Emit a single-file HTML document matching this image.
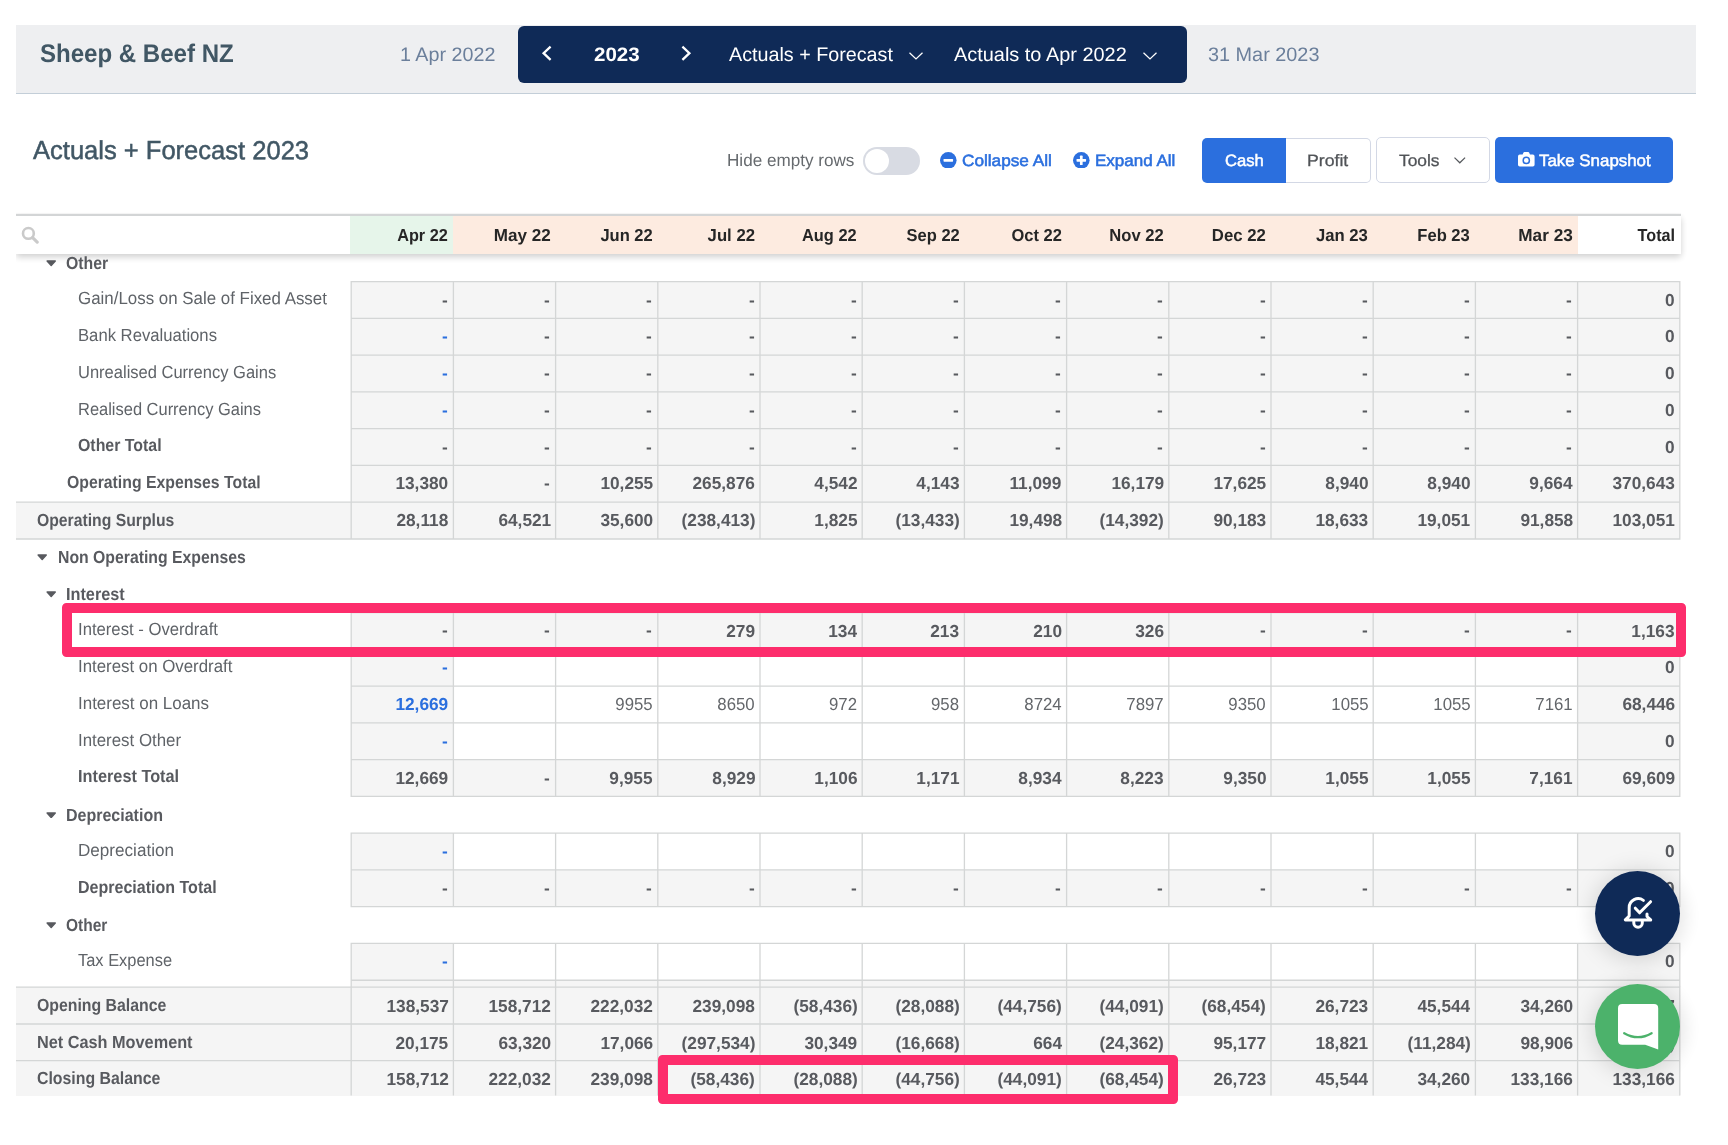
<!DOCTYPE html>
<html><head><meta charset="utf-8"><title>Actuals + Forecast 2023</title>
<style>
html,body{margin:0;padding:0;background:#fff;}
body{width:1728px;height:1145px;position:relative;overflow:hidden;font-family:"Liberation Sans", sans-serif;}
#p div,#p svg{position:absolute;box-sizing:border-box;}
#p .t{white-space:nowrap;height:24px;line-height:24px;}
#p{opacity:0.999;}
</style></head><body><div id="p">
<div style="left:16.00px;top:25.00px;width:1680.00px;height:68.30px;background:#eeeff1;"></div>
<div style="left:16.00px;top:92.80px;width:1680.00px;height:1.20px;background:#c3ced8;"></div>
<div style="left:518.00px;top:26.00px;width:669.00px;height:56.60px;background:#0f2a57;border-radius:6px;"></div>
<svg style="left:542.00px;top:45.60px;overflow:visible" width="9.00" height="14.40" viewBox="0 0 9.00 14.40"><path d="M8.6 0.6 L1.6 7.2 L8.6 13.8" fill="none" stroke="#fff" stroke-width="2.30" stroke-linecap="butt" stroke-linejoin="miter"/></svg>
<svg style="left:681.60px;top:45.60px;overflow:visible" width="9.00" height="14.40" viewBox="0 0 9.00 14.40"><path d="M0.4 0.6 L7.4 7.2 L0.4 13.8" fill="none" stroke="#fff" stroke-width="2.30" stroke-linecap="butt" stroke-linejoin="miter"/></svg>
<svg style="left:909.00px;top:51.50px;overflow:visible" width="14.00" height="8.00" viewBox="0 0 14.00 8.00"><path d="M0.5 0.8 L7 7 L13.5 0.8" fill="none" stroke="#fff" stroke-width="1.25" stroke-linecap="butt" stroke-linejoin="miter"/></svg>
<svg style="left:1142.50px;top:51.50px;overflow:visible" width="14.00" height="8.00" viewBox="0 0 14.00 8.00"><path d="M0.5 0.8 L7 7 L13.5 0.8" fill="none" stroke="#fff" stroke-width="1.25" stroke-linecap="butt" stroke-linejoin="miter"/></svg>
<div style="left:863.20px;top:146.80px;width:56.40px;height:27.80px;background:#d8dbe3;border-radius:14px;"></div>
<div style="left:865.00px;top:148.60px;width:24.20px;height:24.20px;background:#fff;border-radius:12.1px;"></div>
<svg style="left:940px;top:151.5px" width="16.6" height="16.6" viewBox="0 0 16 16"><circle cx="8" cy="8" r="8" fill="#2b6fde"/><rect x="3.4" y="6.7" width="9.2" height="2.6" rx="0.6" fill="#fff"/></svg>
<svg style="left:1073px;top:151.5px" width="16.6" height="16.6" viewBox="0 0 16 16"><circle cx="8" cy="8" r="8" fill="#2b6fde"/><rect x="3.4" y="6.7" width="9.2" height="2.6" rx="0.6" fill="#fff"/><rect x="6.7" y="3.4" width="2.6" height="9.2" rx="0.6" fill="#fff"/></svg>
<div style="left:1202.00px;top:138.00px;width:84.50px;height:45.20px;background:#2b6fde;border-radius:5px 0 0 5px;"></div>
<div style="left:1286.00px;top:138.00px;width:85.00px;height:45.40px;background:#fff;border:1.5px solid #d3d8e5;border-left:none;border-radius:0 5px 5px 0;"></div>
<div style="left:1376.00px;top:137.00px;width:114.00px;height:45.60px;background:#fff;border:1.5px solid #d3d8e5;border-radius:5px;"></div>
<svg style="left:1454.00px;top:157.00px;overflow:visible" width="11.60" height="6.60" viewBox="0 0 11.60 6.60"><path d="M0.5 0.6 L5.8 5.8 L11.1 0.6" fill="none" stroke="#55585c" stroke-width="1.20" stroke-linecap="butt" stroke-linejoin="miter"/></svg>
<div style="left:1495.00px;top:137.00px;width:178.40px;height:45.80px;background:#2b6fde;border-radius:5px;"></div>
<svg style="left:1518px;top:152.2px" width="16.6" height="14.6" viewBox="0 0 16.6 14.6"><path d="M1.8 2.6 H4.6 L5.4 0.7 Q5.7 0 6.4 0 H10.2 Q10.9 0 11.2 0.7 L12 2.6 H14.8 Q16.6 2.6 16.6 4.4 V12.8 Q16.6 14.6 14.8 14.6 H1.8 Q0 14.6 0 12.8 V4.4 Q0 2.6 1.8 2.6 Z" fill="#fff"/><circle cx="8.3" cy="8.4" r="3.1" fill="none" stroke="#2b6fde" stroke-width="1.5"/></svg>
<svg style="left:45.80px;top:260.30px" width="10.4" height="6.8" viewBox="0 0 10.4 6.8"><path d="M1.1 1 H9.3 L5.2 5.6 Z" fill="#585a5f" stroke="#585a5f" stroke-width="1.4" stroke-linejoin="round"/></svg>
<div style="left:16.00px;top:215.00px;width:1664.50px;height:39.20px;background:#fff;box-shadow:0 3px 7px rgba(0,0,0,0.2);clip-path:inset(-2px -12px -18px 0);"></div>
<div style="left:350.10px;top:215.00px;width:103.30px;height:39.20px;background:#e6f5ea;"></div>
<div style="left:453.40px;top:215.00px;width:1124.20px;height:39.20px;background:#fdebe0;"></div>
<div style="left:16.00px;top:211.80px;width:1664.50px;height:2.40px;background:linear-gradient(rgba(0,0,0,0),rgba(0,0,0,0.035));"></div>
<div style="left:16.00px;top:214.10px;width:1664.50px;height:1.80px;background:#d3d5d6;"></div>
<svg style="left:21px;top:226px" width="18" height="18" viewBox="0 0 18 18"><circle cx="7.4" cy="7.4" r="5.4" fill="none" stroke="#cacaca" stroke-width="2.6"/><path d="M11.6 11.6 L16.2 16.2" stroke="#cacaca" stroke-width="3.1" stroke-linecap="round"/></svg>
<div style="left:351.20px;top:281.60px;width:1328.60px;height:36.77px;background:#f5f5f5;"></div>
<div style="left:351.20px;top:318.37px;width:1328.60px;height:36.77px;background:#f5f5f5;"></div>
<div style="left:351.20px;top:355.14px;width:1328.60px;height:36.77px;background:#f5f5f5;"></div>
<div style="left:351.20px;top:391.91px;width:1328.60px;height:36.77px;background:#f5f5f5;"></div>
<div style="left:351.20px;top:428.68px;width:1328.60px;height:36.77px;background:#f5f5f5;"></div>
<div style="left:351.20px;top:465.45px;width:1328.60px;height:36.77px;background:#f5f5f5;"></div>
<div style="left:16.00px;top:502.22px;width:335.20px;height:36.77px;background:#f5f5f5;"></div>
<div style="left:351.20px;top:502.22px;width:1328.60px;height:36.77px;background:#f5f5f5;"></div>
<div style="left:351.20px;top:612.53px;width:1328.60px;height:36.77px;background:#f5f5f5;"></div>
<div style="left:351.20px;top:649.30px;width:102.20px;height:36.77px;background:#f5f5f5;"></div>
<div style="left:1577.60px;top:649.30px;width:102.20px;height:36.77px;background:#f5f5f5;"></div>
<div style="left:351.20px;top:686.07px;width:102.20px;height:36.77px;background:#f5f5f5;"></div>
<div style="left:1577.60px;top:686.07px;width:102.20px;height:36.77px;background:#f5f5f5;"></div>
<div style="left:351.20px;top:722.84px;width:102.20px;height:36.77px;background:#f5f5f5;"></div>
<div style="left:1577.60px;top:722.84px;width:102.20px;height:36.77px;background:#f5f5f5;"></div>
<div style="left:351.20px;top:759.61px;width:1328.60px;height:36.77px;background:#f5f5f5;"></div>
<div style="left:351.20px;top:833.15px;width:102.20px;height:36.77px;background:#f5f5f5;"></div>
<div style="left:1577.60px;top:833.15px;width:102.20px;height:36.77px;background:#f5f5f5;"></div>
<div style="left:351.20px;top:869.92px;width:1328.60px;height:36.77px;background:#f5f5f5;"></div>
<div style="left:351.20px;top:943.46px;width:102.20px;height:36.77px;background:#f5f5f5;"></div>
<div style="left:1577.60px;top:943.46px;width:102.20px;height:36.77px;background:#f5f5f5;"></div>
<svg style="left:37.40px;top:554.28px" width="10.4" height="6.8" viewBox="0 0 10.4 6.8"><path d="M1.1 1 H9.3 L5.2 5.6 Z" fill="#585a5f" stroke="#585a5f" stroke-width="1.4" stroke-linejoin="round"/></svg>
<svg style="left:45.80px;top:591.05px" width="10.4" height="6.8" viewBox="0 0 10.4 6.8"><path d="M1.1 1 H9.3 L5.2 5.6 Z" fill="#585a5f" stroke="#585a5f" stroke-width="1.4" stroke-linejoin="round"/></svg>
<svg style="left:45.80px;top:811.67px" width="10.4" height="6.8" viewBox="0 0 10.4 6.8"><path d="M1.1 1 H9.3 L5.2 5.6 Z" fill="#585a5f" stroke="#585a5f" stroke-width="1.4" stroke-linejoin="round"/></svg>
<svg style="left:45.80px;top:921.98px" width="10.4" height="6.8" viewBox="0 0 10.4 6.8"><path d="M1.1 1 H9.3 L5.2 5.6 Z" fill="#585a5f" stroke="#585a5f" stroke-width="1.4" stroke-linejoin="round"/></svg>
<div style="left:351.20px;top:980.23px;width:1328.60px;height:8.00px;background:#f5f5f5;"></div>
<svg style="left:0;top:0" width="1728" height="1145" viewBox="0 0 1728 1145"><path d="M350.55 281.60H1680.45M350.55 318.37H1680.45M350.55 355.14H1680.45M350.55 391.91H1680.45M350.55 428.68H1680.45M350.55 465.45H1680.45M350.55 502.22H1680.45M350.55 538.99H1680.45M351.20 280.95V539.64M453.40 280.95V539.64M555.60 280.95V539.64M657.80 280.95V539.64M760.00 280.95V539.64M862.20 280.95V539.64M964.40 280.95V539.64M1066.60 280.95V539.64M1168.80 280.95V539.64M1271.00 280.95V539.64M1373.20 280.95V539.64M1475.40 280.95V539.64M1577.60 280.95V539.64M1679.80 280.95V539.64M350.55 612.53H1680.45M350.55 649.30H1680.45M350.55 686.07H1680.45M350.55 722.84H1680.45M350.55 759.61H1680.45M350.55 796.38H1680.45M351.20 611.88V797.03M453.40 611.88V797.03M555.60 611.88V797.03M657.80 611.88V797.03M760.00 611.88V797.03M862.20 611.88V797.03M964.40 611.88V797.03M1066.60 611.88V797.03M1168.80 611.88V797.03M1271.00 611.88V797.03M1373.20 611.88V797.03M1475.40 611.88V797.03M1577.60 611.88V797.03M1679.80 611.88V797.03M350.55 833.15H1680.45M350.55 869.92H1680.45M350.55 906.69H1680.45M351.20 832.50V907.34M453.40 832.50V907.34M555.60 832.50V907.34M657.80 832.50V907.34M760.00 832.50V907.34M862.20 832.50V907.34M964.40 832.50V907.34M1066.60 832.50V907.34M1168.80 832.50V907.34M1271.00 832.50V907.34M1373.20 832.50V907.34M1475.40 832.50V907.34M1577.60 832.50V907.34M1679.80 832.50V907.34M350.55 943.46H1680.45M350.55 980.23H1680.45M351.20 942.81V987.20M453.40 942.81V987.20M555.60 942.81V987.20M657.80 942.81V987.20M760.00 942.81V987.20M862.20 942.81V987.20M964.40 942.81V987.20M1066.60 942.81V987.20M1168.80 942.81V987.20M1271.00 942.81V987.20M1373.20 942.81V987.20M1475.40 942.81V987.20M1577.60 942.81V987.20M1679.80 942.81V987.20M16.00 502.22H351.20M16.00 538.99H351.20" fill="none" stroke="#d4d6d6" stroke-width="1.30"/></svg>
<div style="left:16.00px;top:987.20px;width:1663.80px;height:108.40px;background:#f5f5f5;"></div>
<svg style="left:0;top:0" width="1728" height="1145" viewBox="0 0 1728 1145"><path d="M16.00 987.20H1680.45M16.00 1024.00H1680.45M16.00 1060.60H1680.45M351.20 987.20V1095.60M453.40 987.20V1095.60M555.60 987.20V1095.60M657.80 987.20V1095.60M760.00 987.20V1095.60M862.20 987.20V1095.60M964.40 987.20V1095.60M1066.60 987.20V1095.60M1168.80 987.20V1095.60M1271.00 987.20V1095.60M1373.20 987.20V1095.60M1475.40 987.20V1095.60M1577.60 987.20V1095.60M1679.80 987.20V1095.60" fill="none" stroke="#d4d6d6" stroke-width="1.30"/></svg>
<div style="left:0.00px;top:1095.60px;width:1728.00px;height:49.40px;background:#fff;"></div>
<div class="t" style="top:41.30px;font-size:25.4px;font-weight:700;color:#415765;left:40.00px;transform-origin:0 50%;transform:rotate(0.04deg) scaleX(0.9469);">Sheep &amp; Beef NZ</div>
<div class="t" style="top:42.43px;font-size:19.5px;font-weight:400;color:#6b7f9b;left:400.30px;transform-origin:0 50%;transform:rotate(0.04deg) scaleX(1.0118);">1 Apr 2022</div>
<div class="t" style="top:42.43px;font-size:19.5px;font-weight:400;color:#6b7f9b;left:1207.60px;transform-origin:0 50%;transform:rotate(0.04deg) scaleX(1.0177);">31 Mar 2023</div>
<div class="t" style="top:42.43px;font-size:19.5px;font-weight:700;color:#fff;left:594.00px;transform-origin:0 50%;transform:rotate(0.04deg) scaleX(1.0524);">2023</div>
<div class="t" style="top:42.43px;font-size:19.5px;font-weight:400;color:#fff;left:729.00px;transform-origin:0 50%;transform:rotate(0.04deg) scaleX(1.0118);">Actuals + Forecast</div>
<div class="t" style="top:42.43px;font-size:19.5px;font-weight:400;color:#fff;left:953.70px;transform-origin:0 50%;transform:rotate(0.04deg) scaleX(1.0213);">Actuals to Apr 2022</div>
<div class="t" style="top:137.61px;font-size:26px;font-weight:400;color:#415765;-webkit-text-stroke:0.5px #415765;left:32.60px;transform-origin:0 50%;transform:rotate(0.04deg) scaleX(0.9820);">Actuals + Forecast 2023</div>
<div class="t" style="top:147.61px;font-size:17.4px;font-weight:400;color:#666a6e;left:726.60px;transform-origin:0 50%;transform:rotate(0.04deg) scaleX(0.9830);">Hide empty rows</div>
<div class="t" style="top:147.60px;font-size:16.3px;font-weight:400;color:#2b6fde;-webkit-text-stroke:0.55px #2b6fde;left:961.50px;transform-origin:0 50%;transform:rotate(0.04deg) scaleX(1.0560);">Collapse All</div>
<div class="t" style="top:147.60px;font-size:16.3px;font-weight:400;color:#2b6fde;-webkit-text-stroke:0.55px #2b6fde;left:1094.50px;transform-origin:0 50%;transform:rotate(0.04deg) scaleX(1.0446);">Expand All</div>
<div class="t" style="top:148.10px;font-size:16.5px;font-weight:400;color:#fff;-webkit-text-stroke:0.5px #fff;left:1225.00px;transform-origin:0 50%;transform:rotate(0.04deg) scaleX(1.0049);">Cash</div>
<div class="t" style="top:148.10px;font-size:16.5px;font-weight:400;color:#505357;-webkit-text-stroke:0.3px #505357;left:1307.00px;transform-origin:0 50%;transform:rotate(0.04deg) scaleX(1.0703);">Profit</div>
<div class="t" style="top:148.00px;font-size:16.5px;font-weight:400;color:#505357;-webkit-text-stroke:0.3px #505357;left:1399.00px;transform-origin:0 50%;transform:rotate(0.04deg) scaleX(1.0518);">Tools</div>
<div class="t" style="top:147.90px;font-size:16.5px;font-weight:400;color:#fff;-webkit-text-stroke:0.5px #fff;left:1539.00px;transform-origin:0 50%;transform:rotate(0.04deg) scaleX(1.0233);">Take Snapshot</div>
<div class="t" style="top:251.31px;font-size:17.6px;font-weight:700;color:#585a5f;left:66.30px;transform-origin:0 50%;transform:rotate(0.04deg) scaleX(0.8994);">Other</div>
<div class="t" style="top:222.91px;font-size:17.3px;font-weight:700;color:#262626;right:1279.79px;transform-origin:100% 50%;transform:rotate(0.04deg) scaleX(0.9409);">Apr 22</div>
<div class="t" style="top:222.91px;font-size:17.3px;font-weight:700;color:#262626;right:1177.57px;transform-origin:100% 50%;transform:rotate(0.04deg) scaleX(0.9877);">May 22</div>
<div class="t" style="top:222.91px;font-size:17.3px;font-weight:700;color:#262626;right:1075.39px;transform-origin:100% 50%;transform:rotate(0.04deg) scaleX(0.9563);">Jun 22</div>
<div class="t" style="top:222.91px;font-size:17.3px;font-weight:700;color:#262626;right:973.18px;transform-origin:100% 50%;transform:rotate(0.04deg) scaleX(0.9668);">Jul 22</div>
<div class="t" style="top:222.91px;font-size:17.3px;font-weight:700;color:#262626;right:870.99px;transform-origin:100% 50%;transform:rotate(0.04deg) scaleX(0.9478);">Aug 22</div>
<div class="t" style="top:222.91px;font-size:17.3px;font-weight:700;color:#262626;right:768.79px;transform-origin:100% 50%;transform:rotate(0.04deg) scaleX(0.9532);">Sep 22</div>
<div class="t" style="top:222.91px;font-size:17.3px;font-weight:700;color:#262626;right:666.59px;transform-origin:100% 50%;transform:rotate(0.04deg) scaleX(0.9534);">Oct 22</div>
<div class="t" style="top:222.91px;font-size:17.3px;font-weight:700;color:#262626;right:564.39px;transform-origin:100% 50%;transform:rotate(0.04deg) scaleX(0.9598);">Nov 22</div>
<div class="t" style="top:222.91px;font-size:17.3px;font-weight:700;color:#262626;right:462.18px;transform-origin:100% 50%;transform:rotate(0.04deg) scaleX(0.9673);">Dec 22</div>
<div class="t" style="top:222.91px;font-size:17.3px;font-weight:700;color:#262626;right:359.98px;transform-origin:100% 50%;transform:rotate(0.04deg) scaleX(0.9639);">Jan 23</div>
<div class="t" style="top:222.91px;font-size:17.3px;font-weight:700;color:#262626;right:257.79px;transform-origin:100% 50%;transform:rotate(0.04deg) scaleX(0.9570);">Feb 23</div>
<div class="t" style="top:222.91px;font-size:17.3px;font-weight:700;color:#262626;right:155.57px;transform-origin:100% 50%;transform:rotate(0.04deg) scaleX(0.9943);">Mar 23</div>
<div class="t" style="top:222.91px;font-size:17.3px;font-weight:700;color:#262626;right:52.84px;transform-origin:100% 50%;transform:rotate(0.04deg) scaleX(0.9355);">Total</div>
<div class="t" style="top:287.54px;font-size:17.4px;font-weight:700;color:#585a5f;right:1280.30px;transform-origin:100% 50%;transform:rotate(0.04deg) scaleX(0.9920);">-</div>
<div class="t" style="top:287.54px;font-size:17.4px;font-weight:700;color:#585a5f;right:1178.10px;transform-origin:100% 50%;transform:rotate(0.04deg) scaleX(0.9920);">-</div>
<div class="t" style="top:287.54px;font-size:17.4px;font-weight:700;color:#585a5f;right:1075.90px;transform-origin:100% 50%;transform:rotate(0.04deg) scaleX(0.9920);">-</div>
<div class="t" style="top:287.54px;font-size:17.4px;font-weight:700;color:#585a5f;right:973.70px;transform-origin:100% 50%;transform:rotate(0.04deg) scaleX(0.9920);">-</div>
<div class="t" style="top:287.54px;font-size:17.4px;font-weight:700;color:#585a5f;right:871.50px;transform-origin:100% 50%;transform:rotate(0.04deg) scaleX(0.9920);">-</div>
<div class="t" style="top:287.54px;font-size:17.4px;font-weight:700;color:#585a5f;right:769.30px;transform-origin:100% 50%;transform:rotate(0.04deg) scaleX(0.9920);">-</div>
<div class="t" style="top:287.54px;font-size:17.4px;font-weight:700;color:#585a5f;right:667.10px;transform-origin:100% 50%;transform:rotate(0.04deg) scaleX(0.9920);">-</div>
<div class="t" style="top:287.54px;font-size:17.4px;font-weight:700;color:#585a5f;right:564.90px;transform-origin:100% 50%;transform:rotate(0.04deg) scaleX(0.9920);">-</div>
<div class="t" style="top:287.54px;font-size:17.4px;font-weight:700;color:#585a5f;right:462.70px;transform-origin:100% 50%;transform:rotate(0.04deg) scaleX(0.9920);">-</div>
<div class="t" style="top:287.54px;font-size:17.4px;font-weight:700;color:#585a5f;right:360.50px;transform-origin:100% 50%;transform:rotate(0.04deg) scaleX(0.9920);">-</div>
<div class="t" style="top:287.54px;font-size:17.4px;font-weight:700;color:#585a5f;right:258.30px;transform-origin:100% 50%;transform:rotate(0.04deg) scaleX(0.9920);">-</div>
<div class="t" style="top:287.54px;font-size:17.4px;font-weight:700;color:#585a5f;right:156.10px;transform-origin:100% 50%;transform:rotate(0.04deg) scaleX(0.9920);">-</div>
<div class="t" style="top:287.59px;font-size:17.4px;font-weight:700;color:#585a5f;right:53.10px;transform-origin:100% 50%;transform:rotate(0.04deg) scaleX(0.9920);">0</div>
<div class="t" style="top:286.30px;font-size:17.6px;font-weight:400;color:#5f6368;left:77.90px;transform-origin:0 50%;transform:rotate(0.04deg) scaleX(0.9604);">Gain/Loss on Sale of Fixed Asset</div>
<div class="t" style="top:324.31px;font-size:17.4px;font-weight:700;color:#2b6fde;right:1280.30px;transform-origin:100% 50%;transform:rotate(0.04deg) scaleX(0.9920);">-</div>
<div class="t" style="top:324.31px;font-size:17.4px;font-weight:700;color:#585a5f;right:1178.10px;transform-origin:100% 50%;transform:rotate(0.04deg) scaleX(0.9920);">-</div>
<div class="t" style="top:324.31px;font-size:17.4px;font-weight:700;color:#585a5f;right:1075.90px;transform-origin:100% 50%;transform:rotate(0.04deg) scaleX(0.9920);">-</div>
<div class="t" style="top:324.31px;font-size:17.4px;font-weight:700;color:#585a5f;right:973.70px;transform-origin:100% 50%;transform:rotate(0.04deg) scaleX(0.9920);">-</div>
<div class="t" style="top:324.31px;font-size:17.4px;font-weight:700;color:#585a5f;right:871.50px;transform-origin:100% 50%;transform:rotate(0.04deg) scaleX(0.9920);">-</div>
<div class="t" style="top:324.31px;font-size:17.4px;font-weight:700;color:#585a5f;right:769.30px;transform-origin:100% 50%;transform:rotate(0.04deg) scaleX(0.9920);">-</div>
<div class="t" style="top:324.31px;font-size:17.4px;font-weight:700;color:#585a5f;right:667.10px;transform-origin:100% 50%;transform:rotate(0.04deg) scaleX(0.9920);">-</div>
<div class="t" style="top:324.31px;font-size:17.4px;font-weight:700;color:#585a5f;right:564.90px;transform-origin:100% 50%;transform:rotate(0.04deg) scaleX(0.9920);">-</div>
<div class="t" style="top:324.31px;font-size:17.4px;font-weight:700;color:#585a5f;right:462.70px;transform-origin:100% 50%;transform:rotate(0.04deg) scaleX(0.9920);">-</div>
<div class="t" style="top:324.31px;font-size:17.4px;font-weight:700;color:#585a5f;right:360.50px;transform-origin:100% 50%;transform:rotate(0.04deg) scaleX(0.9920);">-</div>
<div class="t" style="top:324.31px;font-size:17.4px;font-weight:700;color:#585a5f;right:258.30px;transform-origin:100% 50%;transform:rotate(0.04deg) scaleX(0.9920);">-</div>
<div class="t" style="top:324.31px;font-size:17.4px;font-weight:700;color:#585a5f;right:156.10px;transform-origin:100% 50%;transform:rotate(0.04deg) scaleX(0.9920);">-</div>
<div class="t" style="top:324.36px;font-size:17.4px;font-weight:700;color:#585a5f;right:53.10px;transform-origin:100% 50%;transform:rotate(0.04deg) scaleX(0.9920);">0</div>
<div class="t" style="top:323.07px;font-size:17.6px;font-weight:400;color:#5f6368;left:77.90px;transform-origin:0 50%;transform:rotate(0.04deg) scaleX(0.9473);">Bank Revaluations</div>
<div class="t" style="top:361.08px;font-size:17.4px;font-weight:700;color:#2b6fde;right:1280.30px;transform-origin:100% 50%;transform:rotate(0.04deg) scaleX(0.9920);">-</div>
<div class="t" style="top:361.08px;font-size:17.4px;font-weight:700;color:#585a5f;right:1178.10px;transform-origin:100% 50%;transform:rotate(0.04deg) scaleX(0.9920);">-</div>
<div class="t" style="top:361.08px;font-size:17.4px;font-weight:700;color:#585a5f;right:1075.90px;transform-origin:100% 50%;transform:rotate(0.04deg) scaleX(0.9920);">-</div>
<div class="t" style="top:361.08px;font-size:17.4px;font-weight:700;color:#585a5f;right:973.70px;transform-origin:100% 50%;transform:rotate(0.04deg) scaleX(0.9920);">-</div>
<div class="t" style="top:361.08px;font-size:17.4px;font-weight:700;color:#585a5f;right:871.50px;transform-origin:100% 50%;transform:rotate(0.04deg) scaleX(0.9920);">-</div>
<div class="t" style="top:361.08px;font-size:17.4px;font-weight:700;color:#585a5f;right:769.30px;transform-origin:100% 50%;transform:rotate(0.04deg) scaleX(0.9920);">-</div>
<div class="t" style="top:361.08px;font-size:17.4px;font-weight:700;color:#585a5f;right:667.10px;transform-origin:100% 50%;transform:rotate(0.04deg) scaleX(0.9920);">-</div>
<div class="t" style="top:361.08px;font-size:17.4px;font-weight:700;color:#585a5f;right:564.90px;transform-origin:100% 50%;transform:rotate(0.04deg) scaleX(0.9920);">-</div>
<div class="t" style="top:361.08px;font-size:17.4px;font-weight:700;color:#585a5f;right:462.70px;transform-origin:100% 50%;transform:rotate(0.04deg) scaleX(0.9920);">-</div>
<div class="t" style="top:361.08px;font-size:17.4px;font-weight:700;color:#585a5f;right:360.50px;transform-origin:100% 50%;transform:rotate(0.04deg) scaleX(0.9920);">-</div>
<div class="t" style="top:361.08px;font-size:17.4px;font-weight:700;color:#585a5f;right:258.30px;transform-origin:100% 50%;transform:rotate(0.04deg) scaleX(0.9920);">-</div>
<div class="t" style="top:361.08px;font-size:17.4px;font-weight:700;color:#585a5f;right:156.10px;transform-origin:100% 50%;transform:rotate(0.04deg) scaleX(0.9920);">-</div>
<div class="t" style="top:361.13px;font-size:17.4px;font-weight:700;color:#585a5f;right:53.10px;transform-origin:100% 50%;transform:rotate(0.04deg) scaleX(0.9920);">0</div>
<div class="t" style="top:359.84px;font-size:17.6px;font-weight:400;color:#5f6368;left:77.90px;transform-origin:0 50%;transform:rotate(0.04deg) scaleX(0.9383);">Unrealised Currency Gains</div>
<div class="t" style="top:397.85px;font-size:17.4px;font-weight:700;color:#2b6fde;right:1280.30px;transform-origin:100% 50%;transform:rotate(0.04deg) scaleX(0.9920);">-</div>
<div class="t" style="top:397.85px;font-size:17.4px;font-weight:700;color:#585a5f;right:1178.10px;transform-origin:100% 50%;transform:rotate(0.04deg) scaleX(0.9920);">-</div>
<div class="t" style="top:397.85px;font-size:17.4px;font-weight:700;color:#585a5f;right:1075.90px;transform-origin:100% 50%;transform:rotate(0.04deg) scaleX(0.9920);">-</div>
<div class="t" style="top:397.85px;font-size:17.4px;font-weight:700;color:#585a5f;right:973.70px;transform-origin:100% 50%;transform:rotate(0.04deg) scaleX(0.9920);">-</div>
<div class="t" style="top:397.85px;font-size:17.4px;font-weight:700;color:#585a5f;right:871.50px;transform-origin:100% 50%;transform:rotate(0.04deg) scaleX(0.9920);">-</div>
<div class="t" style="top:397.85px;font-size:17.4px;font-weight:700;color:#585a5f;right:769.30px;transform-origin:100% 50%;transform:rotate(0.04deg) scaleX(0.9920);">-</div>
<div class="t" style="top:397.85px;font-size:17.4px;font-weight:700;color:#585a5f;right:667.10px;transform-origin:100% 50%;transform:rotate(0.04deg) scaleX(0.9920);">-</div>
<div class="t" style="top:397.85px;font-size:17.4px;font-weight:700;color:#585a5f;right:564.90px;transform-origin:100% 50%;transform:rotate(0.04deg) scaleX(0.9920);">-</div>
<div class="t" style="top:397.85px;font-size:17.4px;font-weight:700;color:#585a5f;right:462.70px;transform-origin:100% 50%;transform:rotate(0.04deg) scaleX(0.9920);">-</div>
<div class="t" style="top:397.85px;font-size:17.4px;font-weight:700;color:#585a5f;right:360.50px;transform-origin:100% 50%;transform:rotate(0.04deg) scaleX(0.9920);">-</div>
<div class="t" style="top:397.85px;font-size:17.4px;font-weight:700;color:#585a5f;right:258.30px;transform-origin:100% 50%;transform:rotate(0.04deg) scaleX(0.9920);">-</div>
<div class="t" style="top:397.85px;font-size:17.4px;font-weight:700;color:#585a5f;right:156.10px;transform-origin:100% 50%;transform:rotate(0.04deg) scaleX(0.9920);">-</div>
<div class="t" style="top:397.90px;font-size:17.4px;font-weight:700;color:#585a5f;right:53.10px;transform-origin:100% 50%;transform:rotate(0.04deg) scaleX(0.9920);">0</div>
<div class="t" style="top:396.61px;font-size:17.6px;font-weight:400;color:#5f6368;left:77.90px;transform-origin:0 50%;transform:rotate(0.04deg) scaleX(0.9354);">Realised Currency Gains</div>
<div class="t" style="top:434.62px;font-size:17.4px;font-weight:700;color:#585a5f;right:1280.30px;transform-origin:100% 50%;transform:rotate(0.04deg) scaleX(0.9920);">-</div>
<div class="t" style="top:434.62px;font-size:17.4px;font-weight:700;color:#585a5f;right:1178.10px;transform-origin:100% 50%;transform:rotate(0.04deg) scaleX(0.9920);">-</div>
<div class="t" style="top:434.62px;font-size:17.4px;font-weight:700;color:#585a5f;right:1075.90px;transform-origin:100% 50%;transform:rotate(0.04deg) scaleX(0.9920);">-</div>
<div class="t" style="top:434.62px;font-size:17.4px;font-weight:700;color:#585a5f;right:973.70px;transform-origin:100% 50%;transform:rotate(0.04deg) scaleX(0.9920);">-</div>
<div class="t" style="top:434.62px;font-size:17.4px;font-weight:700;color:#585a5f;right:871.50px;transform-origin:100% 50%;transform:rotate(0.04deg) scaleX(0.9920);">-</div>
<div class="t" style="top:434.62px;font-size:17.4px;font-weight:700;color:#585a5f;right:769.30px;transform-origin:100% 50%;transform:rotate(0.04deg) scaleX(0.9920);">-</div>
<div class="t" style="top:434.62px;font-size:17.4px;font-weight:700;color:#585a5f;right:667.10px;transform-origin:100% 50%;transform:rotate(0.04deg) scaleX(0.9920);">-</div>
<div class="t" style="top:434.62px;font-size:17.4px;font-weight:700;color:#585a5f;right:564.90px;transform-origin:100% 50%;transform:rotate(0.04deg) scaleX(0.9920);">-</div>
<div class="t" style="top:434.62px;font-size:17.4px;font-weight:700;color:#585a5f;right:462.70px;transform-origin:100% 50%;transform:rotate(0.04deg) scaleX(0.9920);">-</div>
<div class="t" style="top:434.62px;font-size:17.4px;font-weight:700;color:#585a5f;right:360.50px;transform-origin:100% 50%;transform:rotate(0.04deg) scaleX(0.9920);">-</div>
<div class="t" style="top:434.62px;font-size:17.4px;font-weight:700;color:#585a5f;right:258.30px;transform-origin:100% 50%;transform:rotate(0.04deg) scaleX(0.9920);">-</div>
<div class="t" style="top:434.62px;font-size:17.4px;font-weight:700;color:#585a5f;right:156.10px;transform-origin:100% 50%;transform:rotate(0.04deg) scaleX(0.9920);">-</div>
<div class="t" style="top:434.67px;font-size:17.4px;font-weight:700;color:#585a5f;right:53.10px;transform-origin:100% 50%;transform:rotate(0.04deg) scaleX(0.9920);">0</div>
<div class="t" style="top:433.38px;font-size:17.6px;font-weight:700;color:#585a5f;left:77.90px;transform-origin:0 50%;transform:rotate(0.04deg) scaleX(0.9036);">Other Total</div>
<div class="t" style="top:471.44px;font-size:17.4px;font-weight:700;color:#585a5f;right:1279.50px;transform-origin:100% 50%;transform:rotate(0.04deg) scaleX(0.9920);">13,380</div>
<div class="t" style="top:471.39px;font-size:17.4px;font-weight:700;color:#585a5f;right:1178.10px;transform-origin:100% 50%;transform:rotate(0.04deg) scaleX(0.9920);">-</div>
<div class="t" style="top:471.44px;font-size:17.4px;font-weight:700;color:#585a5f;right:1075.10px;transform-origin:100% 50%;transform:rotate(0.04deg) scaleX(0.9920);">10,255</div>
<div class="t" style="top:471.44px;font-size:17.4px;font-weight:700;color:#585a5f;right:972.90px;transform-origin:100% 50%;transform:rotate(0.04deg) scaleX(0.9920);">265,876</div>
<div class="t" style="top:471.44px;font-size:17.4px;font-weight:700;color:#585a5f;right:870.70px;transform-origin:100% 50%;transform:rotate(0.04deg) scaleX(0.9920);">4,542</div>
<div class="t" style="top:471.44px;font-size:17.4px;font-weight:700;color:#585a5f;right:768.50px;transform-origin:100% 50%;transform:rotate(0.04deg) scaleX(0.9920);">4,143</div>
<div class="t" style="top:471.44px;font-size:17.4px;font-weight:700;color:#585a5f;right:666.30px;transform-origin:100% 50%;transform:rotate(0.04deg) scaleX(0.9920);">11,099</div>
<div class="t" style="top:471.44px;font-size:17.4px;font-weight:700;color:#585a5f;right:564.10px;transform-origin:100% 50%;transform:rotate(0.04deg) scaleX(0.9920);">16,179</div>
<div class="t" style="top:471.44px;font-size:17.4px;font-weight:700;color:#585a5f;right:461.90px;transform-origin:100% 50%;transform:rotate(0.04deg) scaleX(0.9920);">17,625</div>
<div class="t" style="top:471.44px;font-size:17.4px;font-weight:700;color:#585a5f;right:359.70px;transform-origin:100% 50%;transform:rotate(0.04deg) scaleX(0.9920);">8,940</div>
<div class="t" style="top:471.44px;font-size:17.4px;font-weight:700;color:#585a5f;right:257.50px;transform-origin:100% 50%;transform:rotate(0.04deg) scaleX(0.9920);">8,940</div>
<div class="t" style="top:471.44px;font-size:17.4px;font-weight:700;color:#585a5f;right:155.30px;transform-origin:100% 50%;transform:rotate(0.04deg) scaleX(0.9920);">9,664</div>
<div class="t" style="top:471.44px;font-size:17.4px;font-weight:700;color:#585a5f;right:53.10px;transform-origin:100% 50%;transform:rotate(0.04deg) scaleX(0.9920);">370,643</div>
<div class="t" style="top:470.15px;font-size:17.6px;font-weight:700;color:#585a5f;left:66.50px;transform-origin:0 50%;transform:rotate(0.04deg) scaleX(0.8972);">Operating Expenses Total</div>
<div class="t" style="top:508.21px;font-size:17.4px;font-weight:700;color:#585a5f;right:1279.50px;transform-origin:100% 50%;transform:rotate(0.04deg) scaleX(0.9920);">28,118</div>
<div class="t" style="top:508.21px;font-size:17.4px;font-weight:700;color:#585a5f;right:1177.30px;transform-origin:100% 50%;transform:rotate(0.04deg) scaleX(0.9920);">64,521</div>
<div class="t" style="top:508.21px;font-size:17.4px;font-weight:700;color:#585a5f;right:1075.10px;transform-origin:100% 50%;transform:rotate(0.04deg) scaleX(0.9920);">35,600</div>
<div class="t" style="top:508.21px;font-size:17.4px;font-weight:700;color:#585a5f;right:972.90px;transform-origin:100% 50%;transform:rotate(0.04deg) scaleX(0.9920);">(238,413)</div>
<div class="t" style="top:508.21px;font-size:17.4px;font-weight:700;color:#585a5f;right:870.70px;transform-origin:100% 50%;transform:rotate(0.04deg) scaleX(0.9920);">1,825</div>
<div class="t" style="top:508.21px;font-size:17.4px;font-weight:700;color:#585a5f;right:768.50px;transform-origin:100% 50%;transform:rotate(0.04deg) scaleX(0.9920);">(13,433)</div>
<div class="t" style="top:508.21px;font-size:17.4px;font-weight:700;color:#585a5f;right:666.30px;transform-origin:100% 50%;transform:rotate(0.04deg) scaleX(0.9920);">19,498</div>
<div class="t" style="top:508.21px;font-size:17.4px;font-weight:700;color:#585a5f;right:564.10px;transform-origin:100% 50%;transform:rotate(0.04deg) scaleX(0.9920);">(14,392)</div>
<div class="t" style="top:508.21px;font-size:17.4px;font-weight:700;color:#585a5f;right:461.90px;transform-origin:100% 50%;transform:rotate(0.04deg) scaleX(0.9920);">90,183</div>
<div class="t" style="top:508.21px;font-size:17.4px;font-weight:700;color:#585a5f;right:359.70px;transform-origin:100% 50%;transform:rotate(0.04deg) scaleX(0.9920);">18,633</div>
<div class="t" style="top:508.21px;font-size:17.4px;font-weight:700;color:#585a5f;right:257.50px;transform-origin:100% 50%;transform:rotate(0.04deg) scaleX(0.9920);">19,051</div>
<div class="t" style="top:508.21px;font-size:17.4px;font-weight:700;color:#585a5f;right:155.30px;transform-origin:100% 50%;transform:rotate(0.04deg) scaleX(0.9920);">91,858</div>
<div class="t" style="top:508.21px;font-size:17.4px;font-weight:700;color:#585a5f;right:53.10px;transform-origin:100% 50%;transform:rotate(0.04deg) scaleX(0.9920);">103,051</div>
<div class="t" style="top:508.02px;font-size:17.6px;font-weight:700;color:#585a5f;left:37.30px;transform-origin:0 50%;transform:rotate(0.04deg) scaleX(0.8945);">Operating Surplus</div>
<div class="t" style="top:618.47px;font-size:17.4px;font-weight:700;color:#585a5f;right:1280.30px;transform-origin:100% 50%;transform:rotate(0.04deg) scaleX(0.9920);">-</div>
<div class="t" style="top:618.47px;font-size:17.4px;font-weight:700;color:#585a5f;right:1178.10px;transform-origin:100% 50%;transform:rotate(0.04deg) scaleX(0.9920);">-</div>
<div class="t" style="top:618.47px;font-size:17.4px;font-weight:700;color:#585a5f;right:1075.90px;transform-origin:100% 50%;transform:rotate(0.04deg) scaleX(0.9920);">-</div>
<div class="t" style="top:618.52px;font-size:17.4px;font-weight:700;color:#585a5f;right:972.90px;transform-origin:100% 50%;transform:rotate(0.04deg) scaleX(0.9920);">279</div>
<div class="t" style="top:618.52px;font-size:17.4px;font-weight:700;color:#585a5f;right:870.70px;transform-origin:100% 50%;transform:rotate(0.04deg) scaleX(0.9920);">134</div>
<div class="t" style="top:618.52px;font-size:17.4px;font-weight:700;color:#585a5f;right:768.50px;transform-origin:100% 50%;transform:rotate(0.04deg) scaleX(0.9920);">213</div>
<div class="t" style="top:618.52px;font-size:17.4px;font-weight:700;color:#585a5f;right:666.30px;transform-origin:100% 50%;transform:rotate(0.04deg) scaleX(0.9920);">210</div>
<div class="t" style="top:618.52px;font-size:17.4px;font-weight:700;color:#585a5f;right:564.10px;transform-origin:100% 50%;transform:rotate(0.04deg) scaleX(0.9920);">326</div>
<div class="t" style="top:618.47px;font-size:17.4px;font-weight:700;color:#585a5f;right:462.70px;transform-origin:100% 50%;transform:rotate(0.04deg) scaleX(0.9920);">-</div>
<div class="t" style="top:618.47px;font-size:17.4px;font-weight:700;color:#585a5f;right:360.50px;transform-origin:100% 50%;transform:rotate(0.04deg) scaleX(0.9920);">-</div>
<div class="t" style="top:618.47px;font-size:17.4px;font-weight:700;color:#585a5f;right:258.30px;transform-origin:100% 50%;transform:rotate(0.04deg) scaleX(0.9920);">-</div>
<div class="t" style="top:618.47px;font-size:17.4px;font-weight:700;color:#585a5f;right:156.10px;transform-origin:100% 50%;transform:rotate(0.04deg) scaleX(0.9920);">-</div>
<div class="t" style="top:618.52px;font-size:17.4px;font-weight:700;color:#585a5f;right:53.10px;transform-origin:100% 50%;transform:rotate(0.04deg) scaleX(0.9920);">1,163</div>
<div class="t" style="top:617.23px;font-size:17.6px;font-weight:400;color:#5f6368;left:77.90px;transform-origin:0 50%;transform:rotate(0.04deg) scaleX(0.9476);">Interest - Overdraft</div>
<div class="t" style="top:655.24px;font-size:17.4px;font-weight:700;color:#2b6fde;right:1280.30px;transform-origin:100% 50%;transform:rotate(0.04deg) scaleX(0.9920);">-</div>
<div class="t" style="top:655.29px;font-size:17.4px;font-weight:700;color:#585a5f;right:53.10px;transform-origin:100% 50%;transform:rotate(0.04deg) scaleX(0.9920);">0</div>
<div class="t" style="top:654.00px;font-size:17.6px;font-weight:400;color:#5f6368;left:77.90px;transform-origin:0 50%;transform:rotate(0.04deg) scaleX(0.9569);">Interest on Overdraft</div>
<div class="t" style="top:692.06px;font-size:17.4px;font-weight:700;color:#2b6fde;right:1279.50px;transform-origin:100% 50%;transform:rotate(0.04deg) scaleX(0.9920);">12,669</div>
<div class="t" style="top:692.06px;font-size:17.4px;font-weight:400;color:#63666a;right:1075.10px;transform-origin:100% 50%;transform:rotate(0.04deg) scaleX(0.9650);">9955</div>
<div class="t" style="top:692.06px;font-size:17.4px;font-weight:400;color:#63666a;right:972.90px;transform-origin:100% 50%;transform:rotate(0.04deg) scaleX(0.9650);">8650</div>
<div class="t" style="top:692.06px;font-size:17.4px;font-weight:400;color:#63666a;right:870.70px;transform-origin:100% 50%;transform:rotate(0.04deg) scaleX(0.9650);">972</div>
<div class="t" style="top:692.06px;font-size:17.4px;font-weight:400;color:#63666a;right:768.50px;transform-origin:100% 50%;transform:rotate(0.04deg) scaleX(0.9650);">958</div>
<div class="t" style="top:692.06px;font-size:17.4px;font-weight:400;color:#63666a;right:666.30px;transform-origin:100% 50%;transform:rotate(0.04deg) scaleX(0.9650);">8724</div>
<div class="t" style="top:692.06px;font-size:17.4px;font-weight:400;color:#63666a;right:564.10px;transform-origin:100% 50%;transform:rotate(0.04deg) scaleX(0.9650);">7897</div>
<div class="t" style="top:692.06px;font-size:17.4px;font-weight:400;color:#63666a;right:461.90px;transform-origin:100% 50%;transform:rotate(0.04deg) scaleX(0.9650);">9350</div>
<div class="t" style="top:692.06px;font-size:17.4px;font-weight:400;color:#63666a;right:359.70px;transform-origin:100% 50%;transform:rotate(0.04deg) scaleX(0.9650);">1055</div>
<div class="t" style="top:692.06px;font-size:17.4px;font-weight:400;color:#63666a;right:257.50px;transform-origin:100% 50%;transform:rotate(0.04deg) scaleX(0.9650);">1055</div>
<div class="t" style="top:692.06px;font-size:17.4px;font-weight:400;color:#63666a;right:155.30px;transform-origin:100% 50%;transform:rotate(0.04deg) scaleX(0.9650);">7161</div>
<div class="t" style="top:692.06px;font-size:17.4px;font-weight:700;color:#585a5f;right:53.10px;transform-origin:100% 50%;transform:rotate(0.04deg) scaleX(0.9920);">68,446</div>
<div class="t" style="top:690.77px;font-size:17.6px;font-weight:400;color:#5f6368;left:77.90px;transform-origin:0 50%;transform:rotate(0.04deg) scaleX(0.9636);">Interest on Loans</div>
<div class="t" style="top:728.78px;font-size:17.4px;font-weight:700;color:#2b6fde;right:1280.30px;transform-origin:100% 50%;transform:rotate(0.04deg) scaleX(0.9920);">-</div>
<div class="t" style="top:728.83px;font-size:17.4px;font-weight:700;color:#585a5f;right:53.10px;transform-origin:100% 50%;transform:rotate(0.04deg) scaleX(0.9920);">0</div>
<div class="t" style="top:727.54px;font-size:17.6px;font-weight:400;color:#5f6368;left:77.90px;transform-origin:0 50%;transform:rotate(0.04deg) scaleX(0.9582);">Interest Other</div>
<div class="t" style="top:765.60px;font-size:17.4px;font-weight:700;color:#585a5f;right:1279.50px;transform-origin:100% 50%;transform:rotate(0.04deg) scaleX(0.9920);">12,669</div>
<div class="t" style="top:765.55px;font-size:17.4px;font-weight:700;color:#585a5f;right:1178.10px;transform-origin:100% 50%;transform:rotate(0.04deg) scaleX(0.9920);">-</div>
<div class="t" style="top:765.60px;font-size:17.4px;font-weight:700;color:#585a5f;right:1075.10px;transform-origin:100% 50%;transform:rotate(0.04deg) scaleX(0.9920);">9,955</div>
<div class="t" style="top:765.60px;font-size:17.4px;font-weight:700;color:#585a5f;right:972.90px;transform-origin:100% 50%;transform:rotate(0.04deg) scaleX(0.9920);">8,929</div>
<div class="t" style="top:765.60px;font-size:17.4px;font-weight:700;color:#585a5f;right:870.70px;transform-origin:100% 50%;transform:rotate(0.04deg) scaleX(0.9920);">1,106</div>
<div class="t" style="top:765.60px;font-size:17.4px;font-weight:700;color:#585a5f;right:768.50px;transform-origin:100% 50%;transform:rotate(0.04deg) scaleX(0.9920);">1,171</div>
<div class="t" style="top:765.60px;font-size:17.4px;font-weight:700;color:#585a5f;right:666.30px;transform-origin:100% 50%;transform:rotate(0.04deg) scaleX(0.9920);">8,934</div>
<div class="t" style="top:765.60px;font-size:17.4px;font-weight:700;color:#585a5f;right:564.10px;transform-origin:100% 50%;transform:rotate(0.04deg) scaleX(0.9920);">8,223</div>
<div class="t" style="top:765.60px;font-size:17.4px;font-weight:700;color:#585a5f;right:461.90px;transform-origin:100% 50%;transform:rotate(0.04deg) scaleX(0.9920);">9,350</div>
<div class="t" style="top:765.60px;font-size:17.4px;font-weight:700;color:#585a5f;right:359.70px;transform-origin:100% 50%;transform:rotate(0.04deg) scaleX(0.9920);">1,055</div>
<div class="t" style="top:765.60px;font-size:17.4px;font-weight:700;color:#585a5f;right:257.50px;transform-origin:100% 50%;transform:rotate(0.04deg) scaleX(0.9920);">1,055</div>
<div class="t" style="top:765.60px;font-size:17.4px;font-weight:700;color:#585a5f;right:155.30px;transform-origin:100% 50%;transform:rotate(0.04deg) scaleX(0.9920);">7,161</div>
<div class="t" style="top:765.60px;font-size:17.4px;font-weight:700;color:#585a5f;right:53.10px;transform-origin:100% 50%;transform:rotate(0.04deg) scaleX(0.9920);">69,609</div>
<div class="t" style="top:764.31px;font-size:17.6px;font-weight:700;color:#585a5f;left:77.90px;transform-origin:0 50%;transform:rotate(0.04deg) scaleX(0.9266);">Interest Total</div>
<div class="t" style="top:839.09px;font-size:17.4px;font-weight:700;color:#2b6fde;right:1280.30px;transform-origin:100% 50%;transform:rotate(0.04deg) scaleX(0.9920);">-</div>
<div class="t" style="top:839.14px;font-size:17.4px;font-weight:700;color:#585a5f;right:53.10px;transform-origin:100% 50%;transform:rotate(0.04deg) scaleX(0.9920);">0</div>
<div class="t" style="top:837.85px;font-size:17.6px;font-weight:400;color:#5f6368;left:77.90px;transform-origin:0 50%;transform:rotate(0.04deg) scaleX(0.9715);">Depreciation</div>
<div class="t" style="top:875.86px;font-size:17.4px;font-weight:700;color:#585a5f;right:1280.30px;transform-origin:100% 50%;transform:rotate(0.04deg) scaleX(0.9920);">-</div>
<div class="t" style="top:875.86px;font-size:17.4px;font-weight:700;color:#585a5f;right:1178.10px;transform-origin:100% 50%;transform:rotate(0.04deg) scaleX(0.9920);">-</div>
<div class="t" style="top:875.86px;font-size:17.4px;font-weight:700;color:#585a5f;right:1075.90px;transform-origin:100% 50%;transform:rotate(0.04deg) scaleX(0.9920);">-</div>
<div class="t" style="top:875.86px;font-size:17.4px;font-weight:700;color:#585a5f;right:973.70px;transform-origin:100% 50%;transform:rotate(0.04deg) scaleX(0.9920);">-</div>
<div class="t" style="top:875.86px;font-size:17.4px;font-weight:700;color:#585a5f;right:871.50px;transform-origin:100% 50%;transform:rotate(0.04deg) scaleX(0.9920);">-</div>
<div class="t" style="top:875.86px;font-size:17.4px;font-weight:700;color:#585a5f;right:769.30px;transform-origin:100% 50%;transform:rotate(0.04deg) scaleX(0.9920);">-</div>
<div class="t" style="top:875.86px;font-size:17.4px;font-weight:700;color:#585a5f;right:667.10px;transform-origin:100% 50%;transform:rotate(0.04deg) scaleX(0.9920);">-</div>
<div class="t" style="top:875.86px;font-size:17.4px;font-weight:700;color:#585a5f;right:564.90px;transform-origin:100% 50%;transform:rotate(0.04deg) scaleX(0.9920);">-</div>
<div class="t" style="top:875.86px;font-size:17.4px;font-weight:700;color:#585a5f;right:462.70px;transform-origin:100% 50%;transform:rotate(0.04deg) scaleX(0.9920);">-</div>
<div class="t" style="top:875.86px;font-size:17.4px;font-weight:700;color:#585a5f;right:360.50px;transform-origin:100% 50%;transform:rotate(0.04deg) scaleX(0.9920);">-</div>
<div class="t" style="top:875.86px;font-size:17.4px;font-weight:700;color:#585a5f;right:258.30px;transform-origin:100% 50%;transform:rotate(0.04deg) scaleX(0.9920);">-</div>
<div class="t" style="top:875.86px;font-size:17.4px;font-weight:700;color:#585a5f;right:156.10px;transform-origin:100% 50%;transform:rotate(0.04deg) scaleX(0.9920);">-</div>
<div class="t" style="top:875.91px;font-size:17.4px;font-weight:700;color:#585a5f;right:53.10px;transform-origin:100% 50%;transform:rotate(0.04deg) scaleX(0.9920);">0</div>
<div class="t" style="top:874.62px;font-size:17.6px;font-weight:700;color:#585a5f;left:77.90px;transform-origin:0 50%;transform:rotate(0.04deg) scaleX(0.9108);">Depreciation Total</div>
<div class="t" style="top:949.40px;font-size:17.4px;font-weight:700;color:#2b6fde;right:1280.30px;transform-origin:100% 50%;transform:rotate(0.04deg) scaleX(0.9920);">-</div>
<div class="t" style="top:949.45px;font-size:17.4px;font-weight:700;color:#585a5f;right:53.10px;transform-origin:100% 50%;transform:rotate(0.04deg) scaleX(0.9920);">0</div>
<div class="t" style="top:948.16px;font-size:17.6px;font-weight:400;color:#5f6368;left:77.90px;transform-origin:0 50%;transform:rotate(0.04deg) scaleX(0.9340);">Tax Expense</div>
<div class="t" style="top:545.29px;font-size:17.6px;font-weight:700;color:#585a5f;left:57.60px;transform-origin:0 50%;transform:rotate(0.04deg) scaleX(0.8974);">Non Operating Expenses</div>
<div class="t" style="top:582.06px;font-size:17.6px;font-weight:700;color:#585a5f;left:66.10px;transform-origin:0 50%;transform:rotate(0.04deg) scaleX(0.9248);">Interest</div>
<div class="t" style="top:802.68px;font-size:17.6px;font-weight:700;color:#585a5f;left:66.10px;transform-origin:0 50%;transform:rotate(0.04deg) scaleX(0.9097);">Depreciation</div>
<div class="t" style="top:912.99px;font-size:17.6px;font-weight:700;color:#585a5f;left:66.10px;transform-origin:0 50%;transform:rotate(0.04deg) scaleX(0.8821);">Other</div>
<div class="t" style="top:993.91px;font-size:17.4px;font-weight:700;color:#585a5f;right:1279.50px;transform-origin:100% 50%;transform:rotate(0.04deg) scaleX(0.9920);">138,537</div>
<div class="t" style="top:993.91px;font-size:17.4px;font-weight:700;color:#585a5f;right:1177.30px;transform-origin:100% 50%;transform:rotate(0.04deg) scaleX(0.9920);">158,712</div>
<div class="t" style="top:993.91px;font-size:17.4px;font-weight:700;color:#585a5f;right:1075.10px;transform-origin:100% 50%;transform:rotate(0.04deg) scaleX(0.9920);">222,032</div>
<div class="t" style="top:993.91px;font-size:17.4px;font-weight:700;color:#585a5f;right:972.90px;transform-origin:100% 50%;transform:rotate(0.04deg) scaleX(0.9920);">239,098</div>
<div class="t" style="top:993.91px;font-size:17.4px;font-weight:700;color:#585a5f;right:870.70px;transform-origin:100% 50%;transform:rotate(0.04deg) scaleX(0.9920);">(58,436)</div>
<div class="t" style="top:993.91px;font-size:17.4px;font-weight:700;color:#585a5f;right:768.50px;transform-origin:100% 50%;transform:rotate(0.04deg) scaleX(0.9920);">(28,088)</div>
<div class="t" style="top:993.91px;font-size:17.4px;font-weight:700;color:#585a5f;right:666.30px;transform-origin:100% 50%;transform:rotate(0.04deg) scaleX(0.9920);">(44,756)</div>
<div class="t" style="top:993.91px;font-size:17.4px;font-weight:700;color:#585a5f;right:564.10px;transform-origin:100% 50%;transform:rotate(0.04deg) scaleX(0.9920);">(44,091)</div>
<div class="t" style="top:993.91px;font-size:17.4px;font-weight:700;color:#585a5f;right:461.90px;transform-origin:100% 50%;transform:rotate(0.04deg) scaleX(0.9920);">(68,454)</div>
<div class="t" style="top:993.91px;font-size:17.4px;font-weight:700;color:#585a5f;right:359.70px;transform-origin:100% 50%;transform:rotate(0.04deg) scaleX(0.9920);">26,723</div>
<div class="t" style="top:993.91px;font-size:17.4px;font-weight:700;color:#585a5f;right:257.50px;transform-origin:100% 50%;transform:rotate(0.04deg) scaleX(0.9920);">45,544</div>
<div class="t" style="top:993.91px;font-size:17.4px;font-weight:700;color:#585a5f;right:155.30px;transform-origin:100% 50%;transform:rotate(0.04deg) scaleX(0.9920);">34,260</div>
<div class="t" style="top:993.91px;font-size:17.4px;font-weight:700;color:#585a5f;right:53.10px;transform-origin:100% 50%;transform:rotate(0.04deg) scaleX(0.9920);">138,537</div>
<div class="t" style="top:993.31px;font-size:17.6px;font-weight:700;color:#585a5f;left:37.40px;transform-origin:0 50%;transform:rotate(0.04deg) scaleX(0.9000);">Opening Balance</div>
<div class="t" style="top:1030.61px;font-size:17.4px;font-weight:700;color:#585a5f;right:1279.50px;transform-origin:100% 50%;transform:rotate(0.04deg) scaleX(0.9920);">20,175</div>
<div class="t" style="top:1030.61px;font-size:17.4px;font-weight:700;color:#585a5f;right:1177.30px;transform-origin:100% 50%;transform:rotate(0.04deg) scaleX(0.9920);">63,320</div>
<div class="t" style="top:1030.61px;font-size:17.4px;font-weight:700;color:#585a5f;right:1075.10px;transform-origin:100% 50%;transform:rotate(0.04deg) scaleX(0.9920);">17,066</div>
<div class="t" style="top:1030.61px;font-size:17.4px;font-weight:700;color:#585a5f;right:972.90px;transform-origin:100% 50%;transform:rotate(0.04deg) scaleX(0.9920);">(297,534)</div>
<div class="t" style="top:1030.61px;font-size:17.4px;font-weight:700;color:#585a5f;right:870.70px;transform-origin:100% 50%;transform:rotate(0.04deg) scaleX(0.9920);">30,349</div>
<div class="t" style="top:1030.61px;font-size:17.4px;font-weight:700;color:#585a5f;right:768.50px;transform-origin:100% 50%;transform:rotate(0.04deg) scaleX(0.9920);">(16,668)</div>
<div class="t" style="top:1030.61px;font-size:17.4px;font-weight:700;color:#585a5f;right:666.30px;transform-origin:100% 50%;transform:rotate(0.04deg) scaleX(0.9920);">664</div>
<div class="t" style="top:1030.61px;font-size:17.4px;font-weight:700;color:#585a5f;right:564.10px;transform-origin:100% 50%;transform:rotate(0.04deg) scaleX(0.9920);">(24,362)</div>
<div class="t" style="top:1030.61px;font-size:17.4px;font-weight:700;color:#585a5f;right:461.90px;transform-origin:100% 50%;transform:rotate(0.04deg) scaleX(0.9920);">95,177</div>
<div class="t" style="top:1030.61px;font-size:17.4px;font-weight:700;color:#585a5f;right:359.70px;transform-origin:100% 50%;transform:rotate(0.04deg) scaleX(0.9920);">18,821</div>
<div class="t" style="top:1030.61px;font-size:17.4px;font-weight:700;color:#585a5f;right:257.50px;transform-origin:100% 50%;transform:rotate(0.04deg) scaleX(0.9920);">(11,284)</div>
<div class="t" style="top:1030.61px;font-size:17.4px;font-weight:700;color:#585a5f;right:155.30px;transform-origin:100% 50%;transform:rotate(0.04deg) scaleX(0.9920);">98,906</div>
<div class="t" style="top:1030.61px;font-size:17.4px;font-weight:700;color:#585a5f;right:53.10px;transform-origin:100% 50%;transform:rotate(0.04deg) scaleX(0.9920);">(5,371)</div>
<div class="t" style="top:1030.01px;font-size:17.6px;font-weight:700;color:#585a5f;left:37.40px;transform-origin:0 50%;transform:rotate(0.04deg) scaleX(0.9250);">Net Cash Movement</div>
<div class="t" style="top:1067.01px;font-size:17.4px;font-weight:700;color:#585a5f;right:1279.50px;transform-origin:100% 50%;transform:rotate(0.04deg) scaleX(0.9920);">158,712</div>
<div class="t" style="top:1067.01px;font-size:17.4px;font-weight:700;color:#585a5f;right:1177.30px;transform-origin:100% 50%;transform:rotate(0.04deg) scaleX(0.9920);">222,032</div>
<div class="t" style="top:1067.01px;font-size:17.4px;font-weight:700;color:#585a5f;right:1075.10px;transform-origin:100% 50%;transform:rotate(0.04deg) scaleX(0.9920);">239,098</div>
<div class="t" style="top:1067.01px;font-size:17.4px;font-weight:700;color:#585a5f;right:972.90px;transform-origin:100% 50%;transform:rotate(0.04deg) scaleX(0.9920);">(58,436)</div>
<div class="t" style="top:1067.01px;font-size:17.4px;font-weight:700;color:#585a5f;right:870.70px;transform-origin:100% 50%;transform:rotate(0.04deg) scaleX(0.9920);">(28,088)</div>
<div class="t" style="top:1067.01px;font-size:17.4px;font-weight:700;color:#585a5f;right:768.50px;transform-origin:100% 50%;transform:rotate(0.04deg) scaleX(0.9920);">(44,756)</div>
<div class="t" style="top:1067.01px;font-size:17.4px;font-weight:700;color:#585a5f;right:666.30px;transform-origin:100% 50%;transform:rotate(0.04deg) scaleX(0.9920);">(44,091)</div>
<div class="t" style="top:1067.01px;font-size:17.4px;font-weight:700;color:#585a5f;right:564.10px;transform-origin:100% 50%;transform:rotate(0.04deg) scaleX(0.9920);">(68,454)</div>
<div class="t" style="top:1067.01px;font-size:17.4px;font-weight:700;color:#585a5f;right:461.90px;transform-origin:100% 50%;transform:rotate(0.04deg) scaleX(0.9920);">26,723</div>
<div class="t" style="top:1067.01px;font-size:17.4px;font-weight:700;color:#585a5f;right:359.70px;transform-origin:100% 50%;transform:rotate(0.04deg) scaleX(0.9920);">45,544</div>
<div class="t" style="top:1067.01px;font-size:17.4px;font-weight:700;color:#585a5f;right:257.50px;transform-origin:100% 50%;transform:rotate(0.04deg) scaleX(0.9920);">34,260</div>
<div class="t" style="top:1067.01px;font-size:17.4px;font-weight:700;color:#585a5f;right:155.30px;transform-origin:100% 50%;transform:rotate(0.04deg) scaleX(0.9920);">133,166</div>
<div class="t" style="top:1067.01px;font-size:17.4px;font-weight:700;color:#585a5f;right:53.10px;transform-origin:100% 50%;transform:rotate(0.04deg) scaleX(0.9920);">133,166</div>
<div class="t" style="top:1066.41px;font-size:17.6px;font-weight:700;color:#585a5f;left:37.40px;transform-origin:0 50%;transform:rotate(0.04deg) scaleX(0.9012);">Closing Balance</div>
<div style="left:62px;top:602.6px;width:1623.6px;height:54.2px;border:10px solid #fd2d6c;border-radius:4.5px;"></div>
<div style="left:657.6px;top:1054.9px;width:520.4px;height:48.9px;border:10.3px solid #fd2d6c;border-radius:4.5px;"></div>
<div style="left:1594.9px;top:870.5px;width:85.4px;height:85.4px;border-radius:50%;background:#0f2a57;box-shadow:0 2px 22px 3px rgba(0,0,0,0.13);"></div>
<div style="left:1594.9px;top:983.6px;width:85.4px;height:85.4px;border-radius:50%;background:#4cb26b;box-shadow:0 2px 22px 3px rgba(0,0,0,0.13);"></div>
<svg style="left:1620px;top:893px;overflow:visible" width="36" height="40" viewBox="0 0 36 40"><g fill="none" stroke="#fff" stroke-width="3" stroke-linecap="round" stroke-linejoin="round"><path d="M23.4 7.35 A9 9 0 0 0 9.2 14.7 V23 L5.3 26.9 H30.7 L27 23.5 V20.9"/><path d="M13.8 28.4 V30 A4.25 4.25 0 0 0 22.3 30 V28.4"/><path d="M15.3 15.2 L19.6 19.8 L30.6 8.7"/></g></svg>
<svg style="left:1618px;top:1003.5px;overflow:visible" width="41" height="46" viewBox="0 0 41 46"><path d="M4.2 0 H36 Q40.2 0 40.2 4.2 V45.6 L27.2 40.8 H4.2 Q0 40.8 0 36.6 V4.2 Q0 0 4.2 0 Z" fill="#fff"/><path d="M6.2 29.2 Q19.9 37.2 33.6 29.2" fill="none" stroke="#4cb26b" stroke-width="2.3" stroke-linecap="round"/></svg>
</div></body></html>
